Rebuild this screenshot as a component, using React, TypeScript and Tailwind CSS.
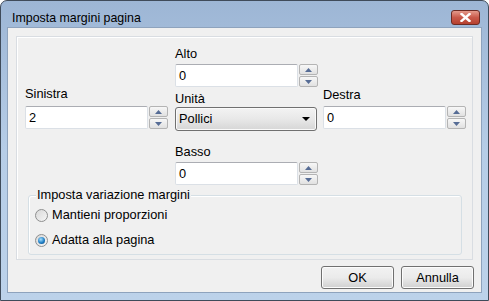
function SpinButtons() {
  return (
    <div className="ml-[1px] flex w-[19px] flex-col gap-px">
      <div className="flex h-[11px] items-center justify-center rounded-[2px] border border-[#b4b4b4] bg-gradient-to-b from-[#f7f7f7] to-[#e1e1e1]">
        <svg width="7" height="4" viewBox="0 0 7 4">
          <path d="M3.5 0 L7 4 L0 4 Z" fill="#566c95" />
        </svg>
      </div>
      <div className="flex h-[11px] items-center justify-center rounded-[2px] border border-[#b4b4b4] bg-gradient-to-b from-[#f7f7f7] to-[#e1e1e1]">
        <svg width="7" height="4" viewBox="0 0 7 4">
          <path d="M0 0 L7 0 L3.5 4 Z" fill="#566c95" />
        </svg>
      </div>
    </div>
  );
}

function NumberField({ value }: { value: string }) {
  return (
    <div className="flex h-[23px]">
      <div className="flex w-[123px] items-center rounded-[2px] border border-[#dbe0e6] border-t-[#abadb3] bg-white pl-[3px]">
        {value}
      </div>
      <SpinButtons />
    </div>
  );
}

function Radio({ label, checked }: { label: string; checked?: boolean }) {
  return (
    <div className="flex h-[14px] items-center gap-[4px]">
      <div className="flex h-[13px] w-[13px] items-center justify-center rounded-full border border-[#8e8f8f] bg-gradient-to-br from-[#d8d8d8] to-[#f6f6f6]">
        {checked && (
          <div className="h-[7px] w-[7px] rounded-full bg-[radial-gradient(circle_at_40%_35%,#a6e0ff,#1f7ec4_55%,#0b3f78)]" />
        )}
      </div>
      <span>{label}</span>
    </div>
  );
}

function DialogButton({ label }: { label: string }) {
  return (
    <button className="flex h-[23px] w-[73px] items-center justify-center rounded-[3px] border border-[#707070] bg-gradient-to-b from-[#f2f2f2] via-[#ebebeb] to-[#d0d0d0] shadow-[inset_0_0_0_1px_#fcfcfc]">
      {label}
    </button>
  );
}

export default function App() {
  return (
    <div className="h-[301px] w-[489px] font-['Liberation_Sans',Arial,sans-serif] text-[12.8px] leading-[14px] text-black">
      <div className="flex h-full w-full flex-col rounded-t-[7px] border border-[#3f4b5a] bg-gradient-to-b from-[#9db6d5] via-[#b6cde7] to-[#bcd2ea]">
        {/* title bar */}
        <div className="flex h-[26px] justify-between pl-[11px] pr-[8px]">
          <span className="mt-[10px] text-[12.4px] text-black">Imposta margini pagina</span>
          <div className="mt-[9px] flex h-[15px] w-[29px] items-center justify-center rounded-[3px] border border-[#6d2b24] bg-gradient-to-b from-[#e49a8c] via-[#c9594a] to-[#b6412f]">
            <svg width="11" height="9" viewBox="0 0 11 9">
              <path d="M1.5 1 L9.5 8 M9.5 1 L1.5 8" stroke="#ffffff" strokeWidth="2.4" strokeLinecap="square" />
            </svg>
          </div>
        </div>

        {/* client area */}
        <div className="mx-[6px] mb-[7px] flex flex-1 flex-col border border-[#8ea3bd] bg-[#f0f0f0]">
          <div className="mx-[8px] mt-[8px] flex h-[224px] flex-col border border-[#d9dde2] shadow-[inset_1px_1px_0_#ffffff]">
            <div className="flex pl-[8px]">
              {/* left column */}
              <div className="flex w-[143px] flex-col pt-[50px]">
                <span>Sinistra</span>
                <div className="mt-[5px]">
                  <NumberField value="2" />
                </div>
              </div>

              {/* center column */}
              <div className="ml-[7px] flex w-[143px] flex-col pt-[10px]">
                <span>Alto</span>
                <div className="mt-[3px]">
                  <NumberField value="0" />
                </div>
                <span className="mt-[5px]">Unità</span>
                <div className="mt-[1px] flex h-[24px] w-[142px] items-center justify-between rounded-[3px] border border-[#707070] bg-gradient-to-b from-[#f3f3f3] via-[#e8e8e8] to-[#d6d6d6] pl-[3px] pr-[6px] shadow-[inset_0_0_0_1px_#fafafa]">
                  <span>Pollici</span>
                  <svg width="8" height="4" viewBox="0 0 8 4">
                    <path d="M0 0 L8 0 L4 4 Z" fill="#000000" />
                  </svg>
                </div>
                <span className="mt-[14px]">Basso</span>
                <div className="mt-[3px]">
                  <NumberField value="0" />
                </div>
              </div>

              {/* right column */}
              <div className="ml-[5px] flex w-[143px] flex-col pt-[51px]">
                <span>Destra</span>
                <div className="mt-[4px]">
                  <NumberField value="0" />
                </div>
              </div>
            </div>

            {/* group box */}
            <div className="relative ml-[11px] mt-[10px] h-[60px] w-[434px] rounded-[3px] border border-[#d5dfe5] shadow-[inset_1px_1px_0_#ffffff]">
              <span className="absolute left-[7px] top-[-8px] bg-[#f0f0f0] px-[1px]">Imposta variazione margini</span>
              <div className="flex flex-col gap-[11px] pl-[6px] pt-[12px]">
                <Radio label="Mantieni proporzioni" />
                <Radio label="Adatta alla pagina" checked />
              </div>
            </div>
          </div>

          {/* buttons */}
          <div className="mt-[6px] flex justify-end gap-[7px] pr-[7px]">
            <DialogButton label="OK" />
            <DialogButton label="Annulla" />
          </div>
        </div>
      </div>
    </div>
  );
}
